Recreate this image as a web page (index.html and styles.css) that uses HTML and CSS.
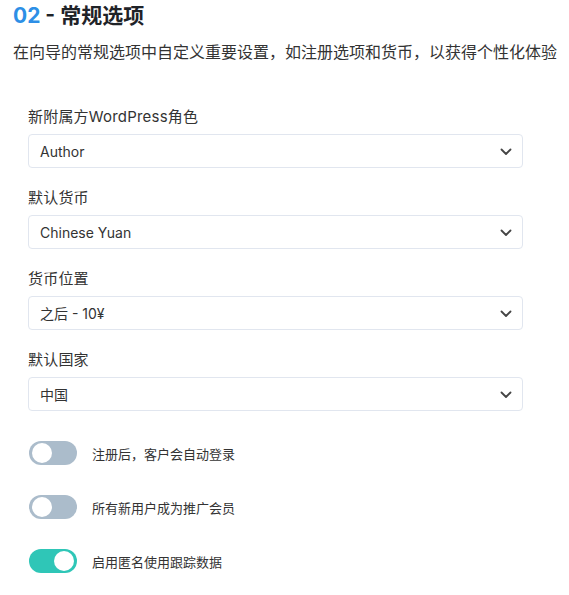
FILE: index.html
```html
<!DOCTYPE html>
<html lang="zh">
<head>
    <meta charset="UTF-8">
    <meta name="viewport" content="width=device-width, initial-scale=1.0">
    <title>常规选项</title>
    <link rel="stylesheet" href="styles.css">
</head>
<body>
    <div class="step">
        <h2 class="step-title"><span class="step-num">02</span> - 常规选项</h2>
        <p class="step-desc">在向导的常规选项中自定义重要设置，如注册选项和货币，以获得个性化体验</p>

        <!-- Выпадающие списки -->
        <div class="fields">
            <div class="field">
                <label>新附属方WordPress角色</label>
                <div class="select-box">
                    <span>Author</span>
                    <svg class="chevron" width="12" height="8" viewBox="0 0 12 8"><path d="M1.5 1.5 L6 6 L10.5 1.5" fill="none" stroke="#444" stroke-width="1.8" stroke-linecap="round" stroke-linejoin="round"/></svg>
                </div>
            </div>
            <div class="field">
                <label>默认货币</label>
                <div class="select-box">
                    <span>Chinese Yuan</span>
                    <svg class="chevron" width="12" height="8" viewBox="0 0 12 8"><path d="M1.5 1.5 L6 6 L10.5 1.5" fill="none" stroke="#444" stroke-width="1.8" stroke-linecap="round" stroke-linejoin="round"/></svg>
                </div>
            </div>
            <div class="field">
                <label>货币位置</label>
                <div class="select-box">
                    <span>之后 - 10¥</span>
                    <svg class="chevron" width="12" height="8" viewBox="0 0 12 8"><path d="M1.5 1.5 L6 6 L10.5 1.5" fill="none" stroke="#444" stroke-width="1.8" stroke-linecap="round" stroke-linejoin="round"/></svg>
                </div>
            </div>
            <div class="field">
                <label>默认国家</label>
                <div class="select-box">
                    <span>中国</span>
                    <svg class="chevron" width="12" height="8" viewBox="0 0 12 8"><path d="M1.5 1.5 L6 6 L10.5 1.5" fill="none" stroke="#444" stroke-width="1.8" stroke-linecap="round" stroke-linejoin="round"/></svg>
                </div>
            </div>
        </div>

        <!-- Переключатели -->
        <div class="toggles">
            <div class="toggle-row">
                <span class="toggle"><span class="knob"></span></span>
                <span class="toggle-label">注册后，客户会自动登录</span>
            </div>
            <div class="toggle-row">
                <span class="toggle"><span class="knob"></span></span>
                <span class="toggle-label">所有新用户成为推广会员</span>
            </div>
            <div class="toggle-row">
                <span class="toggle on"><span class="knob"></span></span>
                <span class="toggle-label">启用匿名使用跟踪数据</span>
            </div>
        </div>
    </div>
</body>
</html>
```

FILE: styles.css
```css
body {
    margin: 0;
    background-color: #fff;
    color: #333;
    font-family: Inter, "Noto Sans CJK SC", sans-serif;
}

.step {
    padding: 4px 0 0 13px;
}

.step-title {
    margin: 0;
    font-size: 21px;
    font-weight: 700;
    line-height: 24px;
    color: #1f2328;
}

.step-num {
    color: #2d8fe6;
}

.step-desc {
    margin: 13px 0 0 0;
    font-size: 16px;
    line-height: 22px;
    color: #333;
    white-space: nowrap;
}

/* Поля выбора */
.fields {
    display: flex;
    flex-direction: column;
    gap: 21px;
    width: 495px;
    margin: 45px 0 0 15px;
}

.field label {
    display: block;
    font-size: 15px;
    line-height: 18px;
    color: #333;
    margin-bottom: 8px;
    letter-spacing: 0.2px;
}

.select-box {
    display: flex;
    justify-content: space-between;
    align-items: center;
    height: 34px;
    padding: 0 10px 0 11px;
    border: 1px solid #e1e6ef;
    border-radius: 4px;
    box-sizing: border-box;
    font-size: 14px;
    color: #333;
}

.chevron {
    margin-top: 1px;
}

/* Переключатели */
.toggles {
    display: flex;
    flex-direction: column;
    gap: 30px;
    margin: 30px 0 0 16px;
}

.toggle-row {
    display: flex;
    align-items: center;
}

.toggle {
    position: relative;
    width: 48px;
    height: 24px;
    border-radius: 12px;
    background-color: #abbccb;
    flex-shrink: 0;
}

.toggle .knob {
    position: absolute;
    top: 2px;
    left: 3px;
    width: 20px;
    height: 20px;
    border-radius: 50%;
    background-color: #fff;
}

.toggle.on {
    background-color: #2fc6b7;
}

.toggle.on .knob {
    left: auto;
    right: 3px;
}

.toggle-label {
    margin-left: 15px;
    font-size: 13px;
    color: #333;
}
```
